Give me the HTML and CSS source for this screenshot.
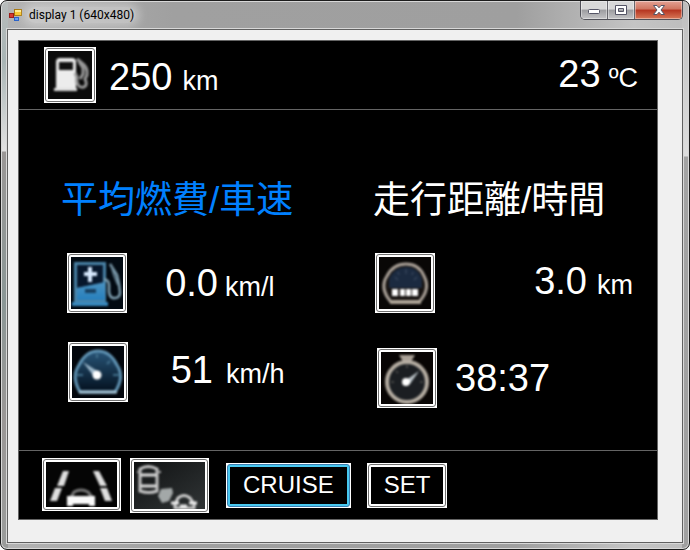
FILE: index.html
```html
<!DOCTYPE html>
<html lang="ja">
<head>
<meta charset="utf-8">
<title>display 1 (640x480)</title>
<link rel="stylesheet" href="styles.css">
</head>
<body>
<div class="window">
  <header class="titlebar">
    <svg class="app-icon" width="14" height="14" viewBox="0 0 14 14" aria-hidden="true">
      <rect x="5.500" y="1.500" width="7" height="6" fill="#f8c830" stroke="#a87810"/>
      <path d="M6 2h6v2H6z" fill="#ffeb91"/>
      <rect x=".5" y="5.500" width="4" height="4" fill="#d83a30" stroke="#9c1c18"/>
      <rect x="5.500" y="9.500" width="4" height="3" fill="#68a0f0" stroke="#2a62c8"/>
    </svg>
    <h1 class="title">display 1 (640x480)</h1>
    <div class="controls">
      <button class="control minimize" aria-label="Minimize">
        <svg width="14" height="12" viewBox="0 0 14 12"><rect x="1.500" y="5.500" width="11" height="4" rx="1" fill="#fff" stroke="#555566"/></svg>
      </button>
      <button class="control maximize" aria-label="Maximize">
        <svg width="14" height="12" viewBox="0 0 14 12"><path d="M1.500 1.500h11v9h-11zM4.500 4.500v3h5v-3z" fill="#fff" fill-rule="evenodd" stroke="#555566"/></svg>
      </button>
      <button class="control close" aria-label="Close">
        <svg width="14" height="12" viewBox="0 0 14 12"><path d="M1.500 1.500h3.500l2 2.300 2-2.300h3.500L9 6l3.500 4.500H9L7 8.200 5 10.500H1.500L5 6z" fill="#fff" stroke="#555566"/></svg>
      </button>
    </div>
  </header>
  <main class="client">
    <div class="screen">
      <section class="status">
        <button class="tile" aria-label="Fuel range"><span class="face">
          <svg width="44" height="48" viewBox="0 0 44 48">
            <rect width="44" height="48" fill="#0b0b0b"/>
            <g class="soft">
              <path d="M8 11q0-4 4-4h12q4 0 4 4v28H8z" fill="#ececec"/>
              <path d="M11 11h14v8H11z" fill="#111"/>
              <path d="M6 37h23v3H6z" fill="#e0e0e0"/>
              <path d="M29 8l6 5q5 4 4 11l-2 4q3 6-1 8-4 1-6-2-2-3-1-8l-2-4" fill="none" stroke="#999" stroke-width="3"/>
              <path d="M31 11l4 6v6l-3 5" fill="none" stroke="#999" stroke-width="3"/>
            </g>
          </svg></span></button>
        <p class="reading range"><span class="value">250</span><span class="unit">km</span></p>
        <p class="reading temperature"><span class="value">23</span><span class="unit">ºC</span></p>
      </section>
      <section class="trip">
        <div class="group economy">
          <h2 class="heading active">平均燃費/車速</h2>
          <div class="row">
            <button class="tile" aria-label="Average fuel economy"><span class="face">
              <svg width="52" height="52" viewBox="0 0 52 52">
                <defs><linearGradient id="tank" x2="0" y2="1"><stop stop-color="#4b93c2"/><stop offset="1" stop-color="#267fbd"/></linearGradient></defs>
                <rect width="52" height="52" fill="#020a12"/>
                <g class="soft">
                  <path d="M3 5h32v42H3z" fill="#4a84a8"/>
                  <path d="M6 8h26v18L6 31z" fill="#07172c"/>
                  <path d="M6 31l28-6v18H6z" fill="url(#tank)"/>
                  <path d="M1 45h36v4H1z" fill="#3888bd"/>
                  <path d="M19 10v15M13 17h13" stroke="#d8eaff" stroke-width="4"/>
                  <path d="M14 34h11" stroke="#173f60" stroke-width="4"/>
                  <path d="M33 22q5 1 5 6v7q1 7 6 6 5 0 5-6-1-10-3-17L39 7" fill="none" stroke="#80a0b1" stroke-width="2.500"/>
                  <path d="M40 8l3 10 4 10" fill="none" stroke="#6b8798" stroke-width="2"/>
                </g>
              </svg></span></button>
            <p class="reading"><span class="value">0.0</span><span class="unit">km/l</span></p>
          </div>
          <div class="row speed">
            <button class="tile" aria-label="Average speed"><span class="face">
              <svg width="52" height="52" viewBox="0 0 52 52">
                <defs><linearGradient id="dial" x2="0" y2="1"><stop stop-color="#285578"/><stop offset="1" stop-color="#03101e"/></linearGradient></defs>
                <rect width="52" height="52" fill="#02060c"/>
                <g class="soft">
                  <path d="M8 46Q-1 31 7 19 14 5 26 5T45 19Q53 31 43 46z" fill="url(#dial)" stroke="#6094b5" stroke-width="3"/>
                  <path d="M7 46h38" stroke="#a5c4d5" stroke-width="3"/>
                  <path d="M4 29h7M41 29h7M25 8v4M38 15l-3 3" stroke="#416f8b" stroke-width="2"/>
                  <path d="M11 16l16 10-4 6z" fill="#9ab5c8"/>
                  <circle cx="25" cy="29" r="4.500" fill="#fff"/>
                </g>
              </svg></span></button>
            <p class="reading"><span class="value">51</span><span class="unit">km/h</span></p>
          </div>
        </div>
        <div class="group distance">
          <h2 class="heading">走行距離/時間</h2>
          <div class="row">
            <button class="tile" aria-label="Distance"><span class="face">
              <svg width="52" height="52" viewBox="0 0 52 52">
                <rect width="52" height="52" fill="#090706"/>
                <g class="soft">
                  <path d="M12 45Q0 31 8 19 14 7 27 7T45 19Q52 32 40 45z" fill="#171311" stroke="#aaa198" stroke-width="3"/>
                  <path d="M10 31V22Q15 10 27 10t16 12v9z" fill="#1b2a40"/>
                  <path d="M16 20l3 3M27 12v5M38 20l-3 3M19 15l1 3M34 15l-1 3" stroke="#36445a" stroke-width="1.500"/>
                  <path d="M13 32h6v7h-6zM21 32h5v7h-5zM27 32h5v7h-5zM33 32h6v7h-6z" fill="#fff"/>
                  <path d="M11 45h31" stroke="#b0a699" stroke-width="4"/>
                </g>
              </svg></span></button>
            <p class="reading"><span class="value">3.0</span><span class="unit">km</span></p>
          </div>
          <div class="row time">
            <button class="tile" aria-label="Driving time"><span class="face">
              <svg width="52" height="52" viewBox="0 0 52 52">
                <rect width="52" height="52" fill="#080504"/>
                <g class="soft">
                  <path d="M18 3h16l-3 5v6H21V8z" fill="#aaa197"/>
                  <circle cx="26" cy="30" r="20" fill="#1b1e22" stroke="#b5ada2" stroke-width="4"/>
                  <path d="M26 13v3M10 30h3M39 30h3M15 19l2 2" stroke="#444" stroke-width="2"/>
                  <path d="M38 19L29 32l-4-4z" fill="#b8c0c5"/>
                  <circle cx="25" cy="30" r="4" fill="#fff"/>
                </g>
              </svg></span></button>
            <p class="reading"><span class="value">38:37</span></p>
          </div>
        </div>
      </section>
      <nav class="actions">
        <button class="tile" aria-label="Lane assist"><span class="face">
          <svg width="71" height="45" viewBox="0 0 71 45">
            <rect width="71" height="45" fill="#050505"/>
            <g class="soft">
              <path d="M17 9h6l-5 15h-7zM9 26h7L11 39H4zM47 9h6l8 15h-7zM54 26h7l5 13h-7z" fill="#dedede"/>
              <path d="M25 35l3-5q7-4 14 0l4 5" fill="none" stroke="#777" stroke-width="3"/>
              <path d="M21 34h28v10h-6v-2H27v2h-6z" fill="#fafafa"/>
            </g>
          </svg></span></button>
        <button class="tile" aria-label="Parking assist"><span class="face">
          <svg width="71" height="47" viewBox="0 0 71 47">
            <defs><linearGradient id="tarmac" x2="1" y2="1"><stop stop-color="#101213"/><stop offset="1" stop-color="#303435"/></linearGradient></defs>
            <rect width="71" height="47" fill="url(#tarmac)"/>
            <g class="soft">
              <path d="M6 7q8-5 17 0v22q-8 3-17 0z" fill="#1a1d1e" stroke="#c4c4c4" stroke-width="3"/>
              <path d="M7 13h15M7 24h15" stroke="#ddd" stroke-width="3"/>
              <path d="M3 10h3M23 10h4" stroke="#aaa" stroke-width="2"/>
              <path d="M24 34l3-7 11-1 1 5-4 8-7 2z" fill="#a3a8a8"/>
              <path d="M41 42l3-6q6-5 12 0l4 6v4H41z" fill="#25292a" stroke="#ccc" stroke-width="3"/>
              <path d="M37 41h8M55 41h8M46 44h7" stroke="#eee" stroke-width="3"/>
            </g>
          </svg></span></button>
        <button class="tile text-tile selected"><span class="face"><span class="label">CRUISE</span></span></button>
        <button class="tile text-tile"><span class="face"><span class="label">SET</span></span></button>
      </nav>
    </div>
  </main>
</div>
</body>
</html>
```
FILE: styles.css
```css
* {
  box-sizing: border-box;
}

body {
  margin: 0;
  background: #fff;
  font-family: "Liberation Sans", Arial, "Noto Sans CJK JP", sans-serif;
}

button {
  padding: 0;
  border: 0;
  font: inherit;
}

h1,
h2,
p {
  margin: 0;
  font-weight: 400;
}

svg {
  display: block;
}

.window {
  display: flex;
  flex-direction: column;
  min-height: 100vh;
  padding: 0 6px 6px;
  border: 1px solid #1c1c1c;
  border-radius: 7px;
  background:
    linear-gradient(#b8bcbc 0, #a9b5b5 60px, #e2e2e2 150px, #9a9796 151px, #8b9796 300px, #9a9796 420px, #9a9c9b 100%) left / 7px 100% no-repeat,
    linear-gradient(#bdbdbd 0, #dedede 155px, #a3a3a3 156px, #a0a0a0 100%) right / 7px 100% no-repeat,
    linear-gradient(90deg, #b4b4b4 0, #a0a0a0 25%, #9f9f9f 75%, #c4c4c4 92%, #bdbdbd 100%);
  box-shadow: inset 0 0 0 1px #d8d8d8;
}

.titlebar {
  display: flex;
  align-items: flex-start;
  height: 28px;
}

.app-icon {
  margin: 7px 4px 0 2px;
}

.title {
  padding: 0 2px;
  margin-top: 6px;
  border-radius: 8px;
  background: rgba(255, 255, 255, .3);
  box-shadow: 0 0 8px 4px rgba(255, 255, 255, .3);
  color: #000;
  font: 12px/16px Roboto, "Open Sans", sans-serif;
}

.controls {
  display: flex;
  margin-left: auto;
  border: 1px solid #505058;
  border-top: 0;
  border-radius: 0 0 5px 5px;
  overflow: hidden;
}

.control {
  display: grid;
  place-items: center;
  width: 27px;
  height: 18px;
  border-right: 1px solid #66666c;
  background: linear-gradient(#d8d8d8 0 45%, #9c9ca0 50%, #c4c4c6);
  box-shadow: inset 0 0 0 1px rgba(255, 255, 255, .4);
}

.close {
  width: 47px;
  border-right: 0;
  background: linear-gradient(#e4a294 0, #d07560 45%, #b53420 50%, #d87858);
}

.client {
  flex: 1;
  padding: 10px 24px 22px 10px;
  border: 1px solid #606060;
  background: #f0f0f0;
  box-shadow: 0 0 0 1px #d8d8d8;
}

.screen {
  display: flex;
  flex-direction: column;
  border: 1px solid #646464;
  background: #000;
  color: #fff;
}

.tile {
  flex: none;
  padding: 1px;
  background: #fff;
}

.face {
  display: block;
  padding: 2px;
  border: 1px solid #707070;
  border-radius: 3px;
  background: #fff;
}

.soft {
  filter: blur(1px);
}

.status {
  display: flex;
  align-items: flex-start;
  padding: 6px 19px 6px 25px;
  border-bottom: 1px solid #646464;
}

.reading {
  display: flex;
  align-items: baseline;
  line-height: 44px;
  white-space: nowrap;
}

.value {
  font-size: 38px;
}

.unit {
  font-size: 27px;
}

.range {
  gap: 10px;
  margin: 8px 0 0 13px;
}

.temperature {
  gap: 8px;
  margin: 5px 0 0 auto;
}

.trip {
  display: grid;
  grid-template-columns: 312fr 284fr;
  min-height: 340px;
  padding: 63px 0 41px 42px;
}

.heading {
  margin-bottom: 24px;
  font-size: 37px;
  line-height: 56px;
  white-space: nowrap;
}

.active {
  color: #0080ff;
}

.row {
  display: flex;
  align-items: center;
}

.row .reading {
  gap: 7px;
}

.economy .row {
  padding-left: 6px;
}

.economy .reading {
  padding-top: 3px;
}

.economy .value {
  width: 91px;
  text-align: right;
}

.economy .speed {
  margin-top: 29px;
  padding-left: 7px;
}

.economy .speed .value {
  width: 85px;
}

.speed .reading {
  gap: 13px;
  padding-top: 0;
}

.distance .row {
  padding: 0 24px 0 2px;
}

.distance .reading {
  gap: 10px;
  margin-left: auto;
}

.distance .time {
  margin-top: 35px;
  padding-left: 4px;
}

.time .reading {
  margin-left: 18px;
  margin-right: auto;
}

.distance .time .reading {
  margin-left: 18px;
}

.actions {
  display: flex;
  align-items: flex-start;
  gap: 9px;
  padding: 7px 23px 6px;
  border-top: 1px solid #646464;
}

.text-tile {
  margin: 5px 0 0 8px;
  color: #fff;
  font-size: 24px;
}

.text-tile + .text-tile {
  margin-left: 7px;
}

.label {
  display: block;
  padding: 0 13px 2px;
  background: #000;
  line-height: 35px;
}

.selected .face {
  border-color: #3c7fb1;
  background: #48c8f0;
}
```
